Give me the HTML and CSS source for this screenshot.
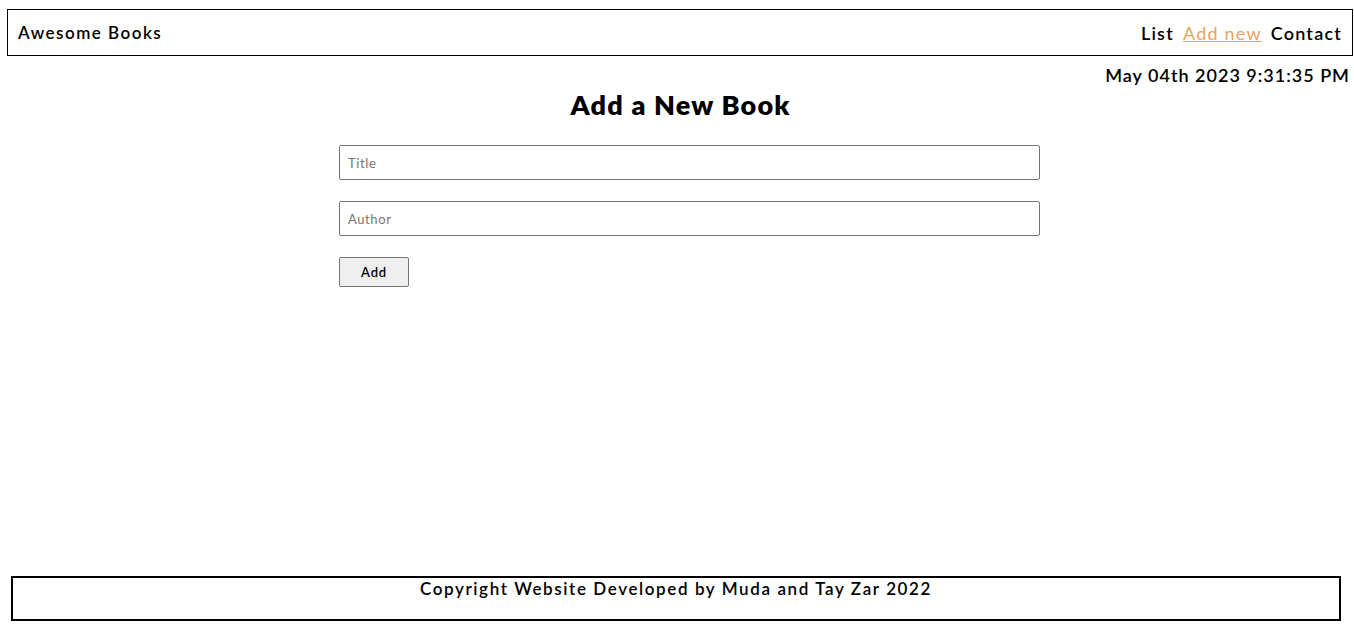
FILE: index.html
```html
<!DOCTYPE html>
<html lang="en">
<head>
<meta charset="utf-8">
<title>Awesome Books</title>
<link rel="stylesheet" href="styles.css">
</head>
<body>
<header class="topbar">
  <h1 class="brand">Awesome Books</h1>
  <nav class="nav">
    <a class="nav-link" href="#">List</a>
    <a class="nav-link nav-link-active" href="#">Add new</a>
    <a class="nav-link" href="#">Contact</a>
  </nav>
</header>
<p class="date">May 04th 2023 9:31:35 PM</p>
<main class="main">
  <h2 class="heading">Add a New Book</h2>
  <form class="book-form">
    <input class="field" type="text" placeholder="Title">
    <input class="field" type="text" placeholder="Author">
    <button class="add-btn" type="button">Add</button>
  </form>
</main>
<footer class="footer">
  <p class="footer-text">Copyright Website Developed by Muda and Tay Zar 2022</p>
</footer>
</body>
</html>
```
FILE: styles.css
```css
html, body {
  height: 100%;
}
body {
  margin: 0;
  display: flex;
  flex-direction: column;
  font-family: "Lato", "Liberation Sans", sans-serif;
  color: #000;
  background: #fff;
}
.topbar {
  margin: 9px 1px 0 7px;
  height: 45px;
  border: 1px solid #000;
  display: flex;
  align-items: center;
  justify-content: space-between;
  padding: 0 10px 0 10px;
}
.brand {
  margin: 0;
  font-size: 17px;
  font-weight: 600;
  letter-spacing: 1.5px;
}
.nav {
  display: flex;
  gap: 9px;
}
.nav-link {
  color: #000;
  text-decoration: none;
  font-size: 18px;
  font-weight: 600;
  letter-spacing: 1.2px;
}
.nav-link-active {
  color: #e8a363;
  font-weight: 400;
  text-decoration: underline;
}
.date {
  margin: 8px 4px 0 0;
  text-align: right;
  font-size: 18px;
  font-weight: 600;
  letter-spacing: 1px;
}
.main {
  padding: 0 314px 0 339px;
}
.heading {
  margin: 2px 0 0 0;
  text-align: center;
  font-size: 27px;
  font-weight: 800;
  letter-spacing: 1.2px;
  padding-right: 18px;
}
.book-form {
  margin-top: 24px;
  display: flex;
  flex-direction: column;
  align-items: flex-start;
  gap: 21px;
}
.field {
  box-sizing: border-box;
  width: 701px;
  height: 35px;
  border: 1px solid #767676;
  border-radius: 2px;
  padding: 0 8px;
  font-family: inherit;
  font-size: 13px;
  letter-spacing: 0.6px;
}
.field::placeholder {
  color: #757575;
}
.add-btn {
  box-sizing: border-box;
  width: 70px;
  height: 30px;
  background: #efefef;
  border: 1px solid #767676;
  border-radius: 2px;
  font-family: inherit;
  font-size: 13px;
  font-weight: 600;
  letter-spacing: 0.8px;
  color: #000;
}
.footer {
  margin: auto 13px 12px 11px;
  height: 41px;
  border: 2px solid #000;
}
.footer-text {
  margin: 0;
  text-align: center;
  font-size: 17px;
  font-weight: 600;
  letter-spacing: 1.6px;
}
```
